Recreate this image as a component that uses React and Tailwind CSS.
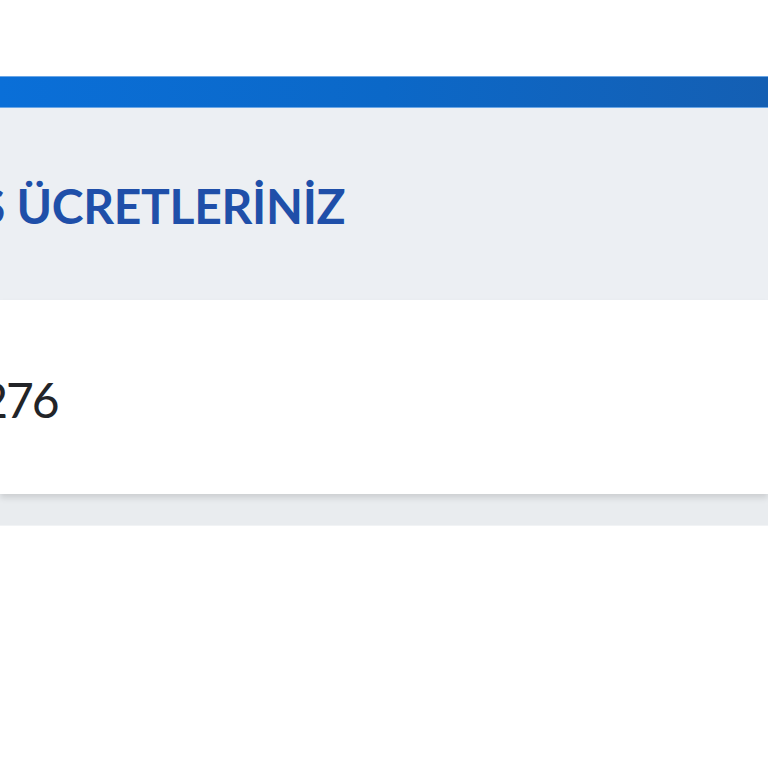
export default function App() {
  return (
    <div className="w-[768px] h-[768px] overflow-hidden bg-white" style={{ fontFamily: 'Lato, "Noto Sans", sans-serif' }}>
      <div className="h-[76px] bg-white" />
      <div className="h-[32px] bg-gradient-to-r from-[#0a6fd8] via-[#0b68c8] to-[#145fb3] border-y border-[#6aa6e6]" />
      <div className="h-[192px] bg-[#eceff3] flex items-center">
        <h2 className="ml-[-21px] text-[48px] font-bold text-[#1f4fa9] tracking-[-0.3px] leading-none whitespace-nowrap pt-[4px]">
          S ÜCRETLERİNİZ
        </h2>
      </div>
      <div className="h-[194px] bg-white flex items-center shadow-[0_4px_6px_rgba(0,0,0,0.12)] relative">
        <span className="ml-[-55px] text-[48px] text-[#222428] tracking-[-2px] leading-none pt-[6px]">1.276</span>
      </div>
      <div className="h-[32px] bg-[#e9ecef] border-b border-[#f1f3f5]" />
      <div className="flex-1 bg-white" />
    </div>
  )
}
